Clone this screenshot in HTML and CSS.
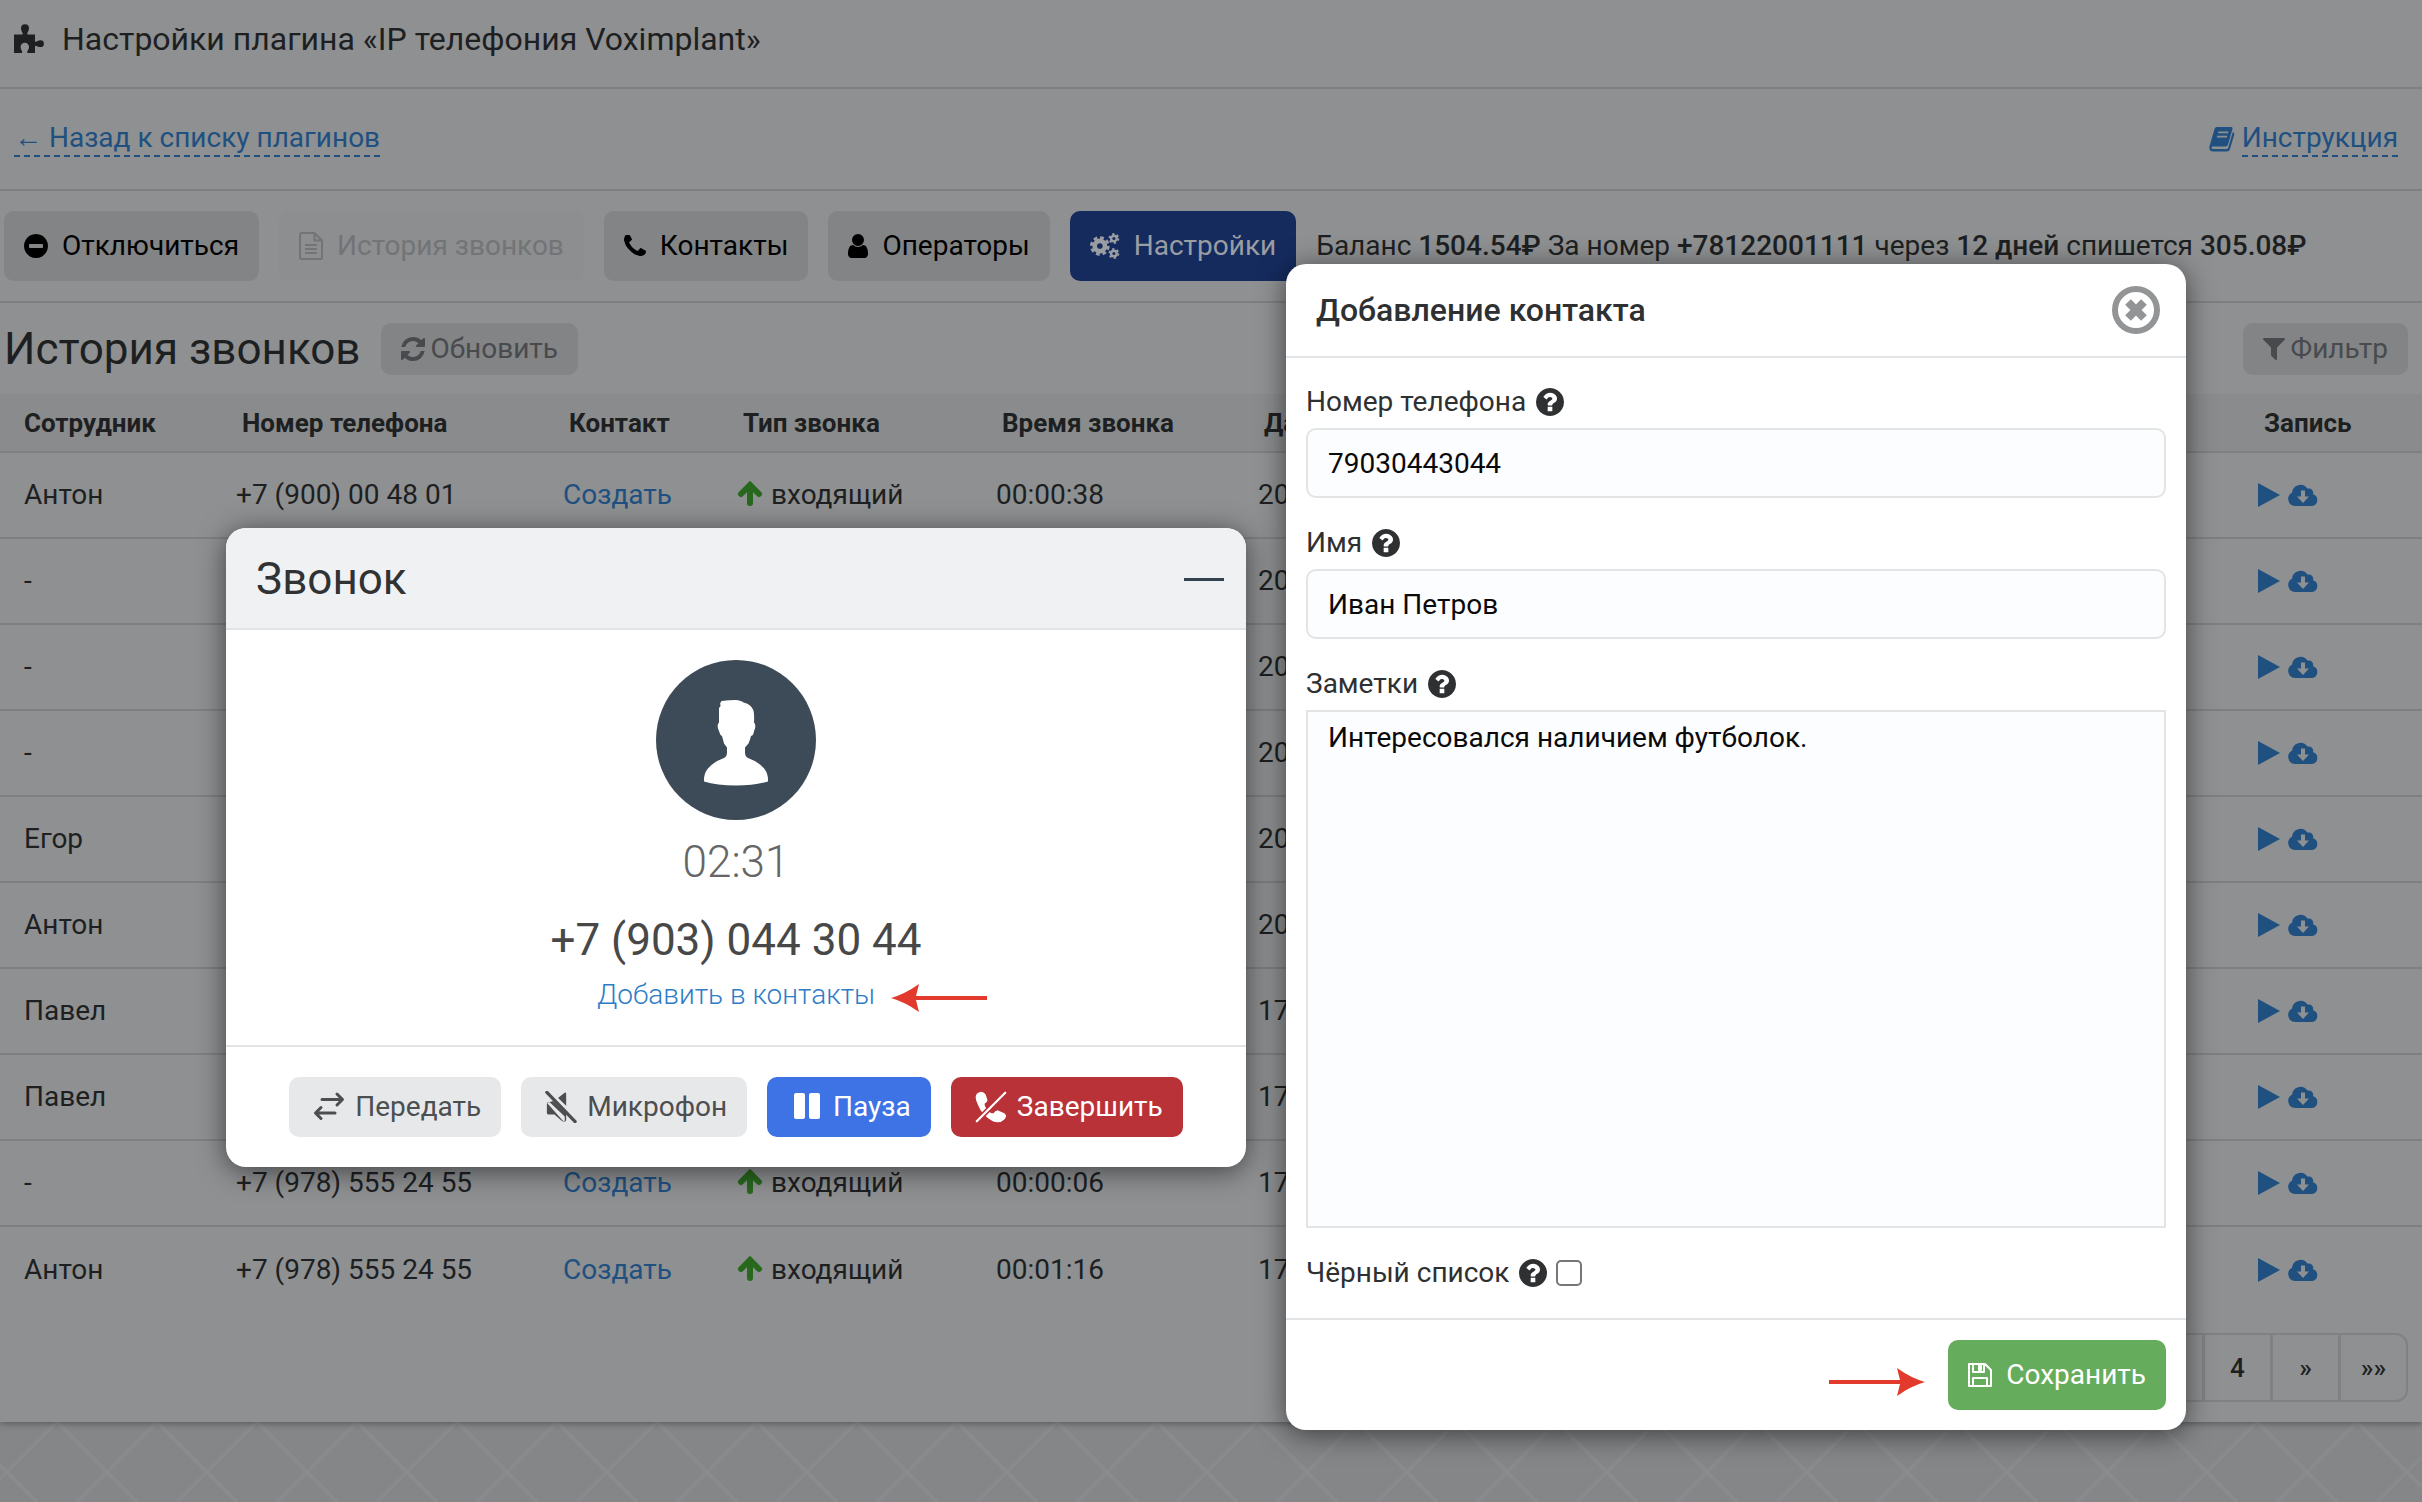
FILE: index.html
```html
<!DOCTYPE html>
<html lang="ru">
<head>
<meta charset="utf-8">
<meta name="viewport" content="width=device-width, initial-scale=1">
<title>Настройки плагина «IP телефония Voximplant»</title>
<link rel="stylesheet" href="styles.css">
</head>
<body>
<svg class="sprite" aria-hidden="true">
  <symbol id="i-puzzle" viewBox="0 0 30 30"><path d="M0 10.500h8.500c1-1.500-1.500-3-1.500-6.200a4 4 0 0 1 8 0c0 3.200-2.500 4.700-1.500 6.200H21v7c1.500 1 2.500-1.200 5.500-1.200a3.400 3.400 0 0 1 0 6.800c-3 0-4-2-5.500-1.200V29h-7.500c-1-2 1.500-3 1.500-6a4.200 4.200 0 0 0-8.400 0c0 3 2.400 4 1.400 6H0z"/></symbol>
  <symbol id="i-minus" viewBox="128 128 1536 1536"><path d="M1344 960v-128q0-26-19-45t-45-19h-768q-26 0-45 19t-19 45v128q0 26 19 45t45 19h768q26 0 45-19t19-45zm320-64q0 209-103 385.500t-279.500 279.500-385.500 103-385.500-103-279.500-279.500-103-385.500 103-385.500 279.500-279.500 385.500-103 385.500 103 279.500 279.500 103 385.500z"/></symbol>
  <symbol id="i-file" viewBox="0 0 24 28"><path fill="none" stroke="currentColor" stroke-width="2" stroke-linejoin="round" d="M15.500 1H2.500Q1 1 1 2.500v23Q1 27 2.500 27h19q1.500 0 1.500-1.500V8.500zM15.500 1v7.500H23M6 13h12M6 17h12M6 21h12"/></symbol>
  <symbol id="i-phone" viewBox="192 192 1408 1408"><path d="M1600 1240q0 27-10 70.500t-21 68.500q-21 50-122 106-94 51-186 51-27 0-53-3.500t-57.500-12.500-47-14.500-55.500-20.500-49-18q-98-35-175-83-127-79-264-216t-216-264q-48-77-83-175-3-9-18-49t-20.500-55.500-14.500-47-12.500-57.500-3.500-53q0-92 51-186 56-101 106-122 25-11 68.500-21t70.500-10q14 0 21 3 18 6 53 76 11 19 30 54t35 63.500 31 53.500q3 4 17.500 25t21.500 35.500 7 28.500q0 20-28.500 50t-62 55-62 53-28.500 46q0 9 5 22.500t8.500 20.500 14 24 11.500 19q76 137 174 235t235 174q2 1 19 11.500t24 14 20.500 8.500 22.500 5q18 0 46-28.500t53-62 55-62 50-28.500q14 0 28.500 7t35.500 21.500 25 17.500q25 15 53.500 31t63.500 35 54 30q70 35 76 53 3 7 3 21z"/></symbol>
  <symbol id="i-user" viewBox="256 128 1280 1536"><path d="M1536 1399q0 109-62.500 187t-150.500 78h-854q-88 0-150.500-78t-62.500-187q0-85 8.500-160.500t31.500-152 58.500-131 94-89 134.500-34.500q131 128 313 128t313-128q76 0 134.500 34.500t94 89 58.500 131 31.500 152 8.500 160.500zm-256-887q0 159-112.500 271.500t-271.500 112.500-271.500-112.500-112.500-271.500 112.500-271.500 271.500-112.500 271.500 112.500 112.500 271.500z"/></symbol>
  <symbol id="i-cogs" viewBox="0 0 32 28"><g fill="none" stroke="currentColor"><circle cx="10.500" cy="14" r="5.500" stroke-width="5"/><circle cx="10.500" cy="14" r="9" stroke-width="3" stroke-dasharray="4 3.070"/><circle cx="25.500" cy="6" r="3" stroke-width="2.600"/><circle cx="25.500" cy="6" r="4.800" stroke-width="2" stroke-dasharray="2.400 2.630"/><circle cx="25.500" cy="22" r="3" stroke-width="2.600"/><circle cx="25.500" cy="22" r="4.800" stroke-width="2" stroke-dasharray="2.400 2.630"/></g></symbol>
  <symbol id="i-refresh" viewBox="128 128 1536 1536"><path d="M1639 1056q0 5-1 7-64 268-268 434.500t-478 166.500q-146 0-282.500-55t-243.500-157l-129 129q-19 19-45 19t-45-19-19-45v-448q0-26 19-45t45-19h448q26 0 45 19t19 45-19 45l-137 137q71 66 161 102t187 36q134 0 250-65t186-179q11-17 53-117 8-23 30-23h192q13 0 22.500 9.500t9.500 22.500zm25-800v448q0 26-19 45t-45 19h-448q-26 0-45-19t-19-45 19-45l138-138q-148-137-349-137-134 0-250 65t-186 179q-11 17-53 117-8 23-30 23h-199q-13 0-22.500-9.500t-9.500-22.500v-7q65-268 270-434.500t480-166.500q146 0 284 55.500t245 156.500l130-129q19-19 45-19t45 19 19 45z"/></symbol>
  <symbol id="i-filter" viewBox="191 256 1410 1408"><path d="M1595 295q17 41-14 70l-493 493v742q0 42-39 59-13 5-25 5-27 0-45-19l-256-256q-19-19-19-45v-486l-493-493q-31-29-14-70 17-39 59-39h1280q42 0 59 39z"/></symbol>
  <symbol id="i-book" viewBox="0 0 26 26"><path fill-rule="evenodd" d="M8 1h14q2 0 1.500 2L19 18.500q-.6 2-2.600 2H4q-1.500 0-1.500 1.200 0 1.300 2 1.300h13q1.300 0 1.700-1.300L23.800 6q2 .6 1.500 2.500L21 23q-.7 2.500-3 2.500H4.500Q0 25.500.3 21L5.500 3Q6 1 8 1zm1.500 4.500L9 7.300h10l.5-1.800zM8.300 9.700l-.5 1.800h10l.5-1.800z"/></symbol>
  <symbol id="i-up" viewBox="0 0 26 26"><path fill="none" stroke="currentColor" stroke-width="6" stroke-linecap="round" stroke-linejoin="miter" d="M13 22V7M4 13l9-9 9 9"/></symbol>
  <symbol id="i-play" viewBox="0 0 22 24"><path d="M0 0l22 12L0 24z"/></symbol>
  <symbol id="i-cloud" viewBox="0 0 30 22"><path fill-rule="evenodd" d="M7 22a7 7 0 0 1-3-13.200A8.500 8.500 0 0 1 19.500 4.600 4.500 4.500 0 0 1 25 10.300 6 6 0 0 1 24 22zM13 6.500v6H9l6 6.500 6-6.500h-4v-6z"/></symbol>
  <symbol id="i-help" viewBox="128 128 1536 1536"><path d="M1024 1376v-192q0-14-9-23t-23-9h-192q-14 0-23 9t-9 23v192q0 14 9 23t23 9h192q14 0 23-9t9-23zm256-672q0-88-55.500-163t-138.500-116-170-41q-243 0-371 213-15 24 8 42l132 100q7 6 19 6 16 0 25-12 53-68 86-92 34-24 86-24 48 0 85.500 26t37.500 59q0 38-20 61t-68 45q-63 28-115.500 86.500t-52.500 125.500v36q0 14 9 23t23 9h192q14 0 23-9t9-23q0-19 21.500-49.500t54.500-49.500q32-18 49-28.500t46-35 44.500-48 28-60.500 12.500-81zm384 192q0 209-103 385.500t-279.500 279.500-385.500 103-385.500-103-279.500-279.500-103-385.500 103-385.500 279.500-279.500 385.500-103 385.500 103 279.500 279.500 103 385.500z"/></symbol>
  <symbol id="i-close" viewBox="0 0 48 48"><circle cx="24" cy="24" r="21" fill="none" stroke="currentColor" stroke-width="6"/><path fill="none" stroke="currentColor" stroke-width="8" d="M16 16l16 16M32 16L16 32"/></symbol>
  <symbol id="i-save" viewBox="0 0 24 24"><path fill="none" stroke="currentColor" stroke-width="2" stroke-linejoin="round" d="M1 1h16l6 6v16H1zM5 1v8h11V1M11 2h2v5h-2zM5 23v-8h14v8"/></symbol>
  <symbol id="i-person" viewBox="0 0 160 160"><circle cx="80" cy="80" r="80" fill="#3d4b58"/><path fill="#fff" d="M65.500 41q8-1 14-1 6 .5 8 2.500 7 1.500 9.500 7 1.500 3 1 13 2 2 1 6-1 2-1.500 5-.5 2-2.500 2.500-1 4-2.500 7.500l-3.500 4v5q0 4 3 5.500 11 4 16.500 11 4 5.500 3.500 12.500-13 4-32 4t-32-4q-.5-7 3.500-12.500 5.500-7 16.500-11 3-1.500 3-5.500v-5l-3-4q-1-4-2-7.500-2-1-2.500-3.500l-1.500-4q-1-4 1-6V48q2.500-2 1-4 .5-1.500 1.500-3z"/></symbol>
  <symbol id="i-transfer" viewBox="0 0 32 32"><path fill="none" stroke="currentColor" stroke-width="3" stroke-linecap="round" stroke-linejoin="round" d="M9 8.500h20M24 3l5.500 5.500L24 14M22 22H3M8 16.500L2.500 22 8 27.500"/></symbol>
  <symbol id="i-mute" viewBox="0 0 34 34"><path d="M2 12.500l17 19c1 1.500 3.500 1 3.500-1V21L11 10zM12.500 8.500L20.500 2q2-1 2 1v16zM2 13l3-1 16 15v4q-1 2-3 1l-8-7H4q-2 0-2-2z"/><path stroke="#e7e8ea" stroke-width="6" d="M3 1l31 30"/><path stroke="currentColor" stroke-width="3.500" stroke-linecap="round" d="M2 1.500l30 31"/></symbol>
  <symbol id="i-pause" viewBox="0 0 32 32"><rect x="3" y="2" width="11" height="26" rx="2"/><rect x="18" y="2" width="11" height="26" rx="2"/></symbol>
  <symbol id="i-hangup" viewBox="0 0 36 36"><path d="M2 3Q8-2 12 4l2 6q0 3-3 4-1 3 3 7 4 5 7 4 2-4 5-3l7 3q4 3 0 7-5 5-13 2Q8 28 3 15-1 7 2 3z"/><path stroke="#b83238" stroke-width="6" d="M3 33L34 2"/><path stroke="currentColor" stroke-width="2.500" stroke-linecap="round" d="M2 34L34 2"/></symbol>
  <symbol id="i-arrow" viewBox="0 0 96 28"><path d="M0 12h71L68 0q14 10 28 14-14 4-28 14l3-12H0z"/></symbol>
</svg>

<main class="page">
  <header class="bar title-bar">
    <svg class="icon-30"><use href="#i-puzzle"/></svg>
    <h1>Настройки плагина «IP телефония Voximplant»</h1>
  </header>

  <nav class="bar link-bar">
    <a class="dashed" href="#">← Назад к списку плагинов</a>
    <a class="manual" href="#"><svg class="icon-26"><use href="#i-book"/></svg><span class="dashed">Инструкция</span></a>
  </nav>

  <div class="bar toolbar">
    <button class="btn" type="button"><svg class="icon-24"><use href="#i-minus"/></svg>Отключиться</button>
    <button class="btn" type="button" disabled><svg class="icon-file"><use href="#i-file"/></svg>История звонков</button>
    <button class="btn" type="button"><svg class="icon-22"><use href="#i-phone"/></svg>Контакты</button>
    <button class="btn" type="button"><svg class="icon-user"><use href="#i-user"/></svg>Операторы</button>
    <button class="btn btn-active" type="button"><svg class="icon-cogs"><use href="#i-cogs"/></svg>Настройки</button>
    <p>Баланс <b>1504.54₽</b> За номер <b>+78122001111</b> через <b>12 дней</b> спишется <b>305.08₽</b></p>
  </div>

  <div class="section-head">
    <h2>История звонков</h2>
    <button class="btn-sm" type="button"><svg class="icon-24"><use href="#i-refresh"/></svg>Обновить</button>
    <button class="btn-sm filter" type="button"><svg class="icon-22"><use href="#i-filter"/></svg>Фильтр</button>
  </div>

  <table class="calls">
    <thead>
      <tr><th class="c-staff">Сотрудник</th><th class="c-phone">Номер телефона</th><th class="c-contact">Контакт</th><th class="c-type">Тип звонка</th><th class="c-time">Время звонка</th><th class="c-date">Дата</th><th class="c-rec">Запись</th></tr>
    </thead>
    <tbody>
      <tr><td>Антон</td><td>+7 (900) 00 48 01</td><td><a href="#">Создать</a></td><td><svg class="up"><use href="#i-up"/></svg>входящий</td><td>00:00:38</td><td>20</td><td><a class="rec" href="#"><svg class="play"><use href="#i-play"/></svg><svg class="cloud"><use href="#i-cloud"/></svg></a></td></tr>
      <tr><td>-</td><td></td><td></td><td></td><td></td><td>20</td><td><a class="rec" href="#"><svg class="play"><use href="#i-play"/></svg><svg class="cloud"><use href="#i-cloud"/></svg></a></td></tr>
      <tr><td>-</td><td></td><td></td><td></td><td></td><td>20</td><td><a class="rec" href="#"><svg class="play"><use href="#i-play"/></svg><svg class="cloud"><use href="#i-cloud"/></svg></a></td></tr>
      <tr><td>-</td><td></td><td></td><td></td><td></td><td>20</td><td><a class="rec" href="#"><svg class="play"><use href="#i-play"/></svg><svg class="cloud"><use href="#i-cloud"/></svg></a></td></tr>
      <tr><td>Егор</td><td></td><td></td><td></td><td></td><td>20</td><td><a class="rec" href="#"><svg class="play"><use href="#i-play"/></svg><svg class="cloud"><use href="#i-cloud"/></svg></a></td></tr>
      <tr><td>Антон</td><td></td><td></td><td></td><td></td><td>20</td><td><a class="rec" href="#"><svg class="play"><use href="#i-play"/></svg><svg class="cloud"><use href="#i-cloud"/></svg></a></td></tr>
      <tr><td>Павел</td><td></td><td></td><td></td><td></td><td>17</td><td><a class="rec" href="#"><svg class="play"><use href="#i-play"/></svg><svg class="cloud"><use href="#i-cloud"/></svg></a></td></tr>
      <tr><td>Павел</td><td></td><td></td><td></td><td></td><td>17</td><td><a class="rec" href="#"><svg class="play"><use href="#i-play"/></svg><svg class="cloud"><use href="#i-cloud"/></svg></a></td></tr>
      <tr><td>-</td><td>+7 (978) 555 24 55</td><td><a href="#">Создать</a></td><td><svg class="up"><use href="#i-up"/></svg>входящий</td><td>00:00:06</td><td>17</td><td><a class="rec" href="#"><svg class="play"><use href="#i-play"/></svg><svg class="cloud"><use href="#i-cloud"/></svg></a></td></tr>
      <tr><td>Антон</td><td>+7 (978) 555 24 55</td><td><a href="#">Создать</a></td><td><svg class="up"><use href="#i-up"/></svg>входящий</td><td>00:01:16</td><td>17</td><td><a class="rec" href="#"><svg class="play"><use href="#i-play"/></svg><svg class="cloud"><use href="#i-cloud"/></svg></a></td></tr>
    </tbody>
  </table>

  <nav class="pager">
    <a href="#"></a><a href="#">4</a><a href="#">»</a><a href="#">»»</a>
  </nav>
</main>
<footer class="pattern"></footer>

<section class="dialog call" role="dialog" aria-labelledby="call-title">
  <header class="call-head">
    <h2 id="call-title">Звонок</h2>
    <button class="minimize" type="button" aria-label="Свернуть"></button>
  </header>
  <div class="call-body">
    <svg class="avatar"><use href="#i-person"/></svg>
    <time>02:31</time>
    <strong>+7 (903) 044 30 44</strong>
    <div class="add"><a href="#">Добавить в контакты</a><svg class="pointer pointer-left"><use href="#i-arrow"/></svg></div>
  </div>
  <footer class="call-foot">
    <button class="act" type="button"><svg class="icon-32"><use href="#i-transfer"/></svg>Передать</button>
    <button class="act" type="button"><svg class="icon-32"><use href="#i-mute"/></svg>Микрофон</button>
    <button class="act act-blue" type="button"><svg class="icon-32"><use href="#i-pause"/></svg>Пауза</button>
    <button class="act act-red" type="button"><svg class="icon-32"><use href="#i-hangup"/></svg>Завершить</button>
  </footer>
</section>

<form class="dialog contact" role="dialog" aria-labelledby="contact-title">
  <header class="contact-head">
    <h2 id="contact-title">Добавление контакта</h2>
    <button class="close" type="button" aria-label="Закрыть"><svg class="icon-48"><use href="#i-close"/></svg></button>
  </header>
  <div class="contact-body">
    <label for="phone">Номер телефона <svg class="icon-28"><use href="#i-help"/></svg></label>
    <input class="field" id="phone" type="text" value="79030443044">
    <label for="name">Имя <svg class="icon-28"><use href="#i-help"/></svg></label>
    <input class="field" id="name" type="text" value="Иван Петров">
    <label for="notes">Заметки <svg class="icon-28"><use href="#i-help"/></svg></label>
    <textarea class="field notes" id="notes">Интересовался наличием футболок.</textarea>
    <div class="check">
      <label for="black">Чёрный список <svg class="icon-28"><use href="#i-help"/></svg></label>
      <input id="black" type="checkbox">
    </div>
  </div>
  <footer class="contact-foot">
    <svg class="pointer pointer-right"><use href="#i-arrow"/></svg>
    <button class="save" type="submit"><svg class="icon-24"><use href="#i-save"/></svg>Сохранить</button>
  </footer>
</form>
</body>
</html>
```
FILE: styles.css
```css
*, *::before, *::after { box-sizing: border-box; }

body {
  margin: 0;
  min-height: 100vh;
  display: flex;
  flex-direction: column;
  position: relative;
  background: #848688;
  color: #1d1f21;
  font: 28px/40px Roboto, "Noto Sans", sans-serif;
}

h1, h2, p { margin: 0; font-weight: 400; }
button { font: inherit; border: 0; cursor: pointer; }
a { color: #205080; text-decoration: none; }
b { font-weight: 500; }
svg { flex: none; fill: currentColor; }
.sprite { display: none; }

.icon-22 { width: 22px; height: 22px; }
.icon-24 { width: 24px; height: 24px; }
.icon-26 { width: 26px; height: 26px; }
.icon-28 { width: 28px; height: 28px; }
.icon-30 { width: 30px; height: 30px; }
.icon-32 { width: 32px; height: 32px; }
.icon-48 { width: 48px; height: 48px; display: block; }
.icon-file { width: 24px; height: 28px; }
.icon-user { width: 20px; height: 24px; }
.icon-cogs { width: 30px; height: 28px; }

/* Main page */
.page {
  background: #8e9092;
  box-shadow: 0 2px 6px rgba(0, 0, 0, .3);
  position: relative;
  padding-bottom: 20px;
}

.bar {
  display: flex;
  align-items: center;
  border-bottom: 2px solid #7d7f81;
}

.title-bar { height: 89px; padding: 0 14px 10px; gap: 18px; }
.title-bar h1 { font-size: 32px; }
.link-bar { height: 102px; padding: 0 24px 0 14px; justify-content: space-between; }
.dashed { border-bottom: 2px dashed #205080; line-height: 34px; }
.manual { display: flex; align-items: center; gap: 7px; }

.toolbar { min-height: 112px; padding: 0 4px; gap: 20px; }

.btn {
  display: flex;
  align-items: center;
  gap: 14px;
  height: 70px;
  padding: 0 20px;
  border-radius: 10px;
  background: #828486;
  color: #000;
}
.btn:disabled { background: #8c8e90; color: #727476; }
.btn-active { background: #152b5e; color: #9a9da2; }

.section-head {
  display: flex;
  align-items: center;
  height: 91px;
  padding: 0 14px 0 4px;
  gap: 20px;
}
.section-head h2 { font-size: 44px; }
.btn-sm {
  display: flex;
  align-items: center;
  gap: 6px;
  height: 52px;
  padding: 0 20px;
  border-radius: 10px;
  background: #828486;
  color: #484a4d;
}
.filter { margin-left: auto; }

/* Call history */
.calls { width: 100%; border-collapse: collapse; table-layout: fixed; }
.calls th, .calls td { text-align: left; padding: 0; white-space: nowrap; }
.calls th {
  height: 58px;
  padding-left: 6px;
  background: #898b8d;
  border-bottom: 2px solid #7d7f81;
  font-size: 26px;
  font-weight: 700;
}
.calls td { height: 86px; border-bottom: 2px solid #7d7f81; }
.calls tbody tr:last-child td { border-bottom: 0; }
.calls th:first-child, .calls td:first-child { padding-left: 24px; }
.c-staff { width: 236px; }
.c-phone { width: 327px; }
.c-contact { width: 174px; }
.c-type { width: 259px; }
.c-time { width: 262px; }
.c-rec { width: 164px; }
.up { width: 26px; height: 26px; margin-right: 8px; vertical-align: -3px; color: #28681d; }
.rec { display: flex; align-items: center; gap: 8px; }
.play { width: 22px; height: 24px; }
.cloud { width: 30px; height: 22px; }

.pager { display: flex; justify-content: flex-end; padding: 21px 14px 0; }
.pager a {
  width: 69px;
  height: 69px;
  margin-left: -1px;
  border: 2px solid #7f8183;
  color: #1d1f21;
  font-size: 26px;
  font-weight: 500;
  line-height: 66px;
  text-align: center;
}
.pager a:last-child { border-radius: 0 12px 12px 0; }

.pattern {
  flex: 1;
  min-height: 80px;
  background-image:
    linear-gradient(45deg, transparent calc(50% - 3px), #8a8c8e 50%, transparent calc(50% + 3px)),
    linear-gradient(-45deg, transparent calc(50% - 3px), #8a8c8e 50%, transparent calc(50% + 3px));
  background-size: 100px 100px;
  background-position: 7px -50px;
}

/* Floating windows */
.dialog {
  position: absolute;
  background: #fff;
  border-radius: 20px;
  box-shadow: 0 4px 28px rgba(0, 0, 0, .55);
}

.call { left: 226px; top: 528px; width: 1020px; }
.call-head {
  display: flex;
  align-items: center;
  justify-content: space-between;
  height: 102px;
  padding: 2px 22px 0 30px;
  background: #f0f1f3;
  border-bottom: 2px solid #e2e4e5;
  border-radius: 20px 20px 0 0;
  color: #303234;
}
.call-head h2 { font-size: 44px; }
.minimize { width: 40px; height: 3px; padding: 0; background: #33424f; }
.call-body {
  display: flex;
  flex-direction: column;
  align-items: center;
  padding: 30px 0 25px;
  border-bottom: 2px solid #e2e4e5;
}
.avatar { width: 160px; height: 160px; }
.call-body time { margin-top: 12px; font-size: 44px; font-weight: 300; line-height: 60px; color: #666; }
.call-body strong { margin-top: 18px; font-size: 44px; font-weight: 400; line-height: 60px; color: #484848; }
.add { position: relative; line-height: 50px; font-weight: 300; }
.add a { color: #2e7cc6; }
.pointer { position: absolute; width: 96px; height: 28px; color: #e23b2e; }
.pointer-left { left: calc(100% + 16px); top: 14px; transform: scaleX(-1); }
.pointer-right { right: 261px; top: 48px; }

.call-foot { display: flex; justify-content: center; gap: 20px; padding: 30px 0; }
.act {
  display: flex;
  align-items: center;
  gap: 10px;
  height: 60px;
  padding: 0 20px 0 24px;
  border-radius: 10px;
  background: #e7e8ea;
  color: #4c4e50;
}
.act-blue { background: #3d73e5; color: #fff; }
.act-red { background: #b83238; color: #fff; }

.contact { left: 1286px; top: 264px; width: 900px; color: #2e3032; }
.contact-head {
  display: flex;
  align-items: center;
  justify-content: space-between;
  height: 94px;
  padding: 0 26px 0 30px;
  border-bottom: 2px solid #e2e4e5;
}
.contact-head h2 { font-size: 32px; font-weight: 500; }
.close { padding: 0; background: none; color: #929496; }
.contact-body { display: flex; flex-direction: column; padding: 24px 20px 25px; }
.contact-body label { display: flex; align-items: center; gap: 10px; height: 40px; }
.field {
  height: 70px;
  margin: 6px 0 25px;
  padding: 0 20px;
  border: 2px solid #e2e4e5;
  border-radius: 10px;
  background: #fcfdfe;
  color: #0a0a0a;
  font: inherit;
}
.notes { height: 518px; padding: 6px 20px; border-radius: 0; resize: none; }
.check { display: flex; align-items: center; gap: 9px; }
.check input {
  appearance: none;
  width: 26px;
  height: 26px;
  margin: 0;
  border: 2px solid #767676;
  border-radius: 5px;
  background: #fff;
}
.check input:checked { background: #3d73e5; }
.contact-foot {
  position: relative;
  display: flex;
  justify-content: flex-end;
  padding: 20px;
  border-top: 2px solid #e2e4e5;
}
.save {
  display: flex;
  align-items: center;
  gap: 14px;
  height: 70px;
  padding: 0 20px;
  border-radius: 10px;
  background: #66ac5d;
  color: #fff;
}
```
